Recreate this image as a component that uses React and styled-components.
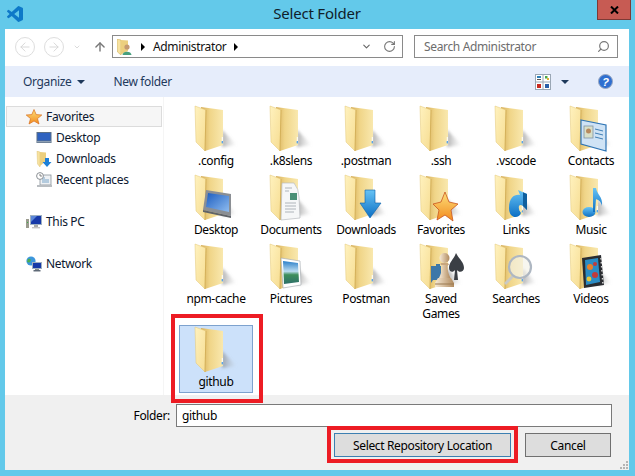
import React from "react";
import styled, { createGlobalStyle } from "styled-components";
import { ArrowUp, ArrowLeft, ArrowRight, ChevronDown, RotateCw, Search } from "lucide-react";

const GlobalStyle = createGlobalStyle`
  html, body { margin: 0; padding: 0; background: #63c9ea; }
  * { box-sizing: border-box; }
`;

const Frame = styled.div`
  position: relative;
  display: flex;
  flex-direction: column;
  width: 635px;
  height: 476px;
  overflow: hidden;
  background: #63c9ea;
  font-family: "Noto Sans", "Open Sans", sans-serif;
  font-size: 12px;
  letter-spacing: -0.35px;
  color: #000;
`;

const TitleBar = styled.div`
  display: flex;
  align-items: flex-start;
  height: 29px;
`;

const Logo = styled.svg`
  width: 16px;
  height: 16px;
  margin: 6px 0 0 7px;
  fill: #0e79c8;
`;

const Title = styled.div`
  flex: 1;
  padding: 3px 0 0 14px;
  text-align: center;
  font-size: 15px;
  line-height: 20px;
  letter-spacing: -0.2px;
  color: #10202a;
`;

const CloseButton = styled.div`
  display: flex;
  align-items: center;
  justify-content: center;
  width: 34px;
  height: 20px;
  margin-right: 4px;
  background: #c75b53;
  border: 1px solid #7d3a36;
  border-top: 0;
`;

const Client = styled.div`
  display: flex;
  flex-direction: column;
  height: 441px;
  margin: 0 6px 0 5px;
  background: #fff;
`;

const NavRow = styled.div`
  display: flex;
  align-items: flex-start;
  height: 37px;
  padding: 6px 0 0 10px;
`;

const NavCircle = styled.div`
  display: flex;
  align-items: center;
  justify-content: center;
  width: 20px;
  height: 20px;
  margin: 2px 9px 0 0;
  color: #d4d4d4;
  border: 1px solid #dedede;
  border-radius: 50%;
`;

const NavGlyph = styled.div`
  display: flex;
  align-items: center;
  justify-content: center;
  height: 23px;
  width: ${(p) => p.$w}px;
  margin-right: ${(p) => p.$mr}px;
  color: ${(p) => p.$color};
`;

const PathBox = styled.div`
  display: flex;
  align-items: center;
  width: 291px;
  height: 23px;
  padding: 0 4px;
  border: 1px solid #8a8a8a;
`;

const PathText = styled.span`
  margin: 0 8px;
  color: #111;
`;

const RightTri = styled.span`
  width: 0;
  height: 0;
  border-left: 4px solid #000;
  border-top: 4px solid transparent;
  border-bottom: 4px solid transparent;
`;

const Spacer = styled.span`
  flex: ${(p) => (p.$w ? `0 0 ${p.$w}px` : 1)};
`;

const SearchBox = styled.div`
  display: flex;
  align-items: center;
  width: 204px;
  height: 23px;
  margin-left: 11px;
  padding: 0 7px 0 9px;
  border: 1px solid #8a8a8a;
  color: #6d6d6d;
`;

const FlippedSearch = styled(Search)`
  transform: scaleX(-1);
`;

const Toolbar = styled.div`
  display: flex;
  align-items: center;
  height: 31px;
  padding-left: 18px;
  background: #e6edfb;
  color: #1e395b;
`;

const DownTri = styled.span`
  width: 0;
  height: 0;
  margin: 0 ${(p) => p.$mr || 0}px 0 ${(p) => p.$ml || 0}px;
  border-top: 4px solid #1e395b;
  border-left: 4px solid transparent;
  border-right: 4px solid transparent;
`;

const Body = styled.div`
  display: flex;
  height: 298px;
`;

const Sidebar = styled.div`
  width: 159px;
  padding-top: 9px;
  border-right: 1px solid #f5f5f5;
`;

const TreeGroup = styled.div`
  margin-bottom: 21px;
`;

const TreeRow = styled.div`
  display: flex;
  align-items: center;
  gap: 4px;
  width: 156px;
  height: 21px;
  margin-left: 1px;
  padding-left: ${(p) => (p.$child ? 29 : 19)}px;
  color: #0c1830;
  border: 1px solid ${(p) => (p.$active ? "#dcdcdc" : "transparent")};
  background: ${(p) => (p.$active ? "#f6f6f6" : "transparent")};
`;

const FileGrid = styled.div`
  display: grid;
  grid-template-columns: repeat(6, 75px);
  grid-template-rows: 68px 68px 82px 68px;
  row-gap: 1px;
  padding: 7px 0 0 15px;
`;

const Tile = styled.div`
  position: relative;
  width: 74px;
  padding-top: 1px;
  text-align: center;
  line-height: 15px;
  border: 1px solid ${(p) => (p.$selected ? "#7da2ce" : "transparent")};
  background: ${(p) => (p.$selected ? "#cce1fa" : "transparent")};
  ${(p) =>
    p.$selected &&
    `&::after {
      content: "";
      position: absolute;
      inset: -12px -11px -11px -9px;
      border: 4.5px solid #ed1c24;
      z-index: 2;
    }`}
`;

const FolderSvg = styled.svg`
  display: block;
  width: 48px;
  height: 46px;
  margin: 0 0 1px 15px;
  overflow: visible;
`;

const Label = styled.div`
  padding: 0 4px;
  color: #000;
`;

const Footer = styled.div`
  display: flex;
  flex-direction: column;
  position: relative;
  height: 75px;
  padding-top: 9px;
  background: #f0f0f0;
`;

const FolderRow = styled.div`
  display: flex;
  align-items: center;
  justify-content: flex-end;
  padding-right: 17px;
`;

const FolderInput = styled.div`
  width: 436px;
  height: 23px;
  margin-left: 6px;
  padding-left: 5px;
  line-height: 21px;
  background: #fff;
  border: 1px solid #7a7a7a;
`;

const ButtonRow = styled.div`
  display: flex;
  justify-content: flex-end;
  gap: 14px;
  margin-top: 6px;
  padding-right: 18px;
`;

const Button = styled.div`
  position: relative;
  display: flex;
  align-items: center;
  justify-content: center;
  width: ${(p) => p.$w}px;
  height: 24px;
  background: #dddddd;
  border: 1px solid ${(p) => (p.$primary ? "#3c7fb1" : "#707070")};
  ${(p) =>
    p.$primary &&
    `&::after {
      content: "";
      position: absolute;
      inset: -8px -8px -7px -8px;
      border: 4px solid #ed1c24;
    }`}
`;

const Grip = styled.svg`
  position: absolute;
  right: 1px;
  bottom: 1px;
  width: 9px;
  height: 9px;
  fill: #b4b4b4;
`;

const DefsHolder = styled.svg`
  display: block;
`;

const GradientDefs = () => (
  <DefsHolder width="0" height="0">
    <defs>
      <linearGradient id="flap" x1="0" y1="0" x2="1" y2="1">
        <stop offset="0" stopColor="#fff2bf" />
        <stop offset="1" stopColor="#f6dc90" />
      </linearGradient>
      <linearGradient id="back" x1="0" y1="0" x2="1" y2="0">
        <stop offset="0" stopColor="#d6ae5a" />
        <stop offset="0.4" stopColor="#f0d588" />
        <stop offset="1" stopColor="#f9e8ae" />
      </linearGradient>
      <linearGradient id="shade" x1="0" y1="0" x2="1" y2="0">
        <stop offset="0" stopColor="#777" stopOpacity="0.6" />
        <stop offset="1" stopColor="#bdbdbd" stopOpacity="0" />
      </linearGradient>
      <filter id="soft" x="-30%" y="-30%" width="160%" height="160%">
        <feGaussianBlur stdDeviation="1.4" />
      </filter>
      <linearGradient id="screen" x1="0" y1="0" x2="1" y2="1">
        <stop offset="0" stopColor="#1d5ec0" />
        <stop offset="1" stopColor="#8fbcf0" />
      </linearGradient>
      <linearGradient id="bluearrow" x1="0" y1="0" x2="0" y2="1">
        <stop offset="0" stopColor="#67c3f5" />
        <stop offset="1" stopColor="#0c6fc4" />
      </linearGradient>
      <linearGradient id="starfill" x1="0" y1="0" x2="0" y2="1">
        <stop offset="0" stopColor="#fde07a" />
        <stop offset="1" stopColor="#f28a1e" />
      </linearGradient>
      <linearGradient id="photo" x1="0" y1="0" x2="0" y2="1">
        <stop offset="0" stopColor="#2b7fc9" />
        <stop offset="0.45" stopColor="#bcdcf0" />
        <stop offset="0.6" stopColor="#3f8f5a" />
        <stop offset="1" stopColor="#2d6f6a" />
      </linearGradient>
      <linearGradient id="pawn" x1="0" y1="0" x2="1" y2="0">
        <stop offset="0" stopColor="#f7ead6" />
        <stop offset="1" stopColor="#b08a5e" />
      </linearGradient>
    </defs>
  </DefsHolder>
);

const DesktopOverlay = () => (
  <g>
    <polygon points="11,15 36,19 36,41 8,35" fill="#8b8f94" />
    <polygon points="13,18 34,21 34,37 11,32" fill="url(#screen)" />
    <polygon points="8,35 36,41 36,43 8,37" fill="#5f6368" />
  </g>
);

const DocumentsOverlay = () => (
  <g>
    <path d="M12 8 L24 8 Q29 14 29 22 L30 43 L11 45 Z" fill="#f6f7f8" stroke="#b9bcc0" strokeWidth="0.7" />
    <path d="M15 13h7M15 16h4M15 28h11M15 31h11M15 34h11M15 37h9" stroke="#aeb4ba" strokeWidth="1" />
    <rect x="20" y="18" width="7" height="7" fill="#4a8f76" />
  </g>
);

const DownloadsOverlay = () => (
  <polygon points="20,15 30,15 30,28 36,28 25,43 15,28 20,28" fill="url(#bluearrow)" stroke="#0c5fa8" strokeWidth="0.6" />
);

const ContactsOverlay = () => (
  <g>
    <polygon points="11,14 36,19 36,45 11,38" fill="#cfe3f5" stroke="#2f75b5" strokeWidth="1.2" />
    <rect x="14" y="20" width="9" height="12" fill="#d8dfc8" stroke="#7f93a6" strokeWidth="0.8" />
    <circle cx="18.5" cy="25" r="2.5" fill="#b78a5e" />
    <path d="M25 23l8 2M25 27l8 2M25 31l8 2" stroke="#3f7fb5" strokeWidth="1" />
  </g>
);

const StarShape = () => (
  <polygon
    points="25,17 29,27 38,29 31,35 33,46 25,40 17,45 19,35 13,29 21,27"
    fill="url(#starfill)"
    stroke="#c9541e"
    strokeWidth="0.8"
  />
);

const LinksOverlay = () => (
  <g>
    <path d="M14 33 C14 22 20 19 25 20 L23 15 L32 19 L32 35 L28 31 C24 28 22 32 26 38 C24 44 14 44 14 33 Z" fill="url(#bluearrow)" />
    <path d="M28 17.2 L32 19 L32 35 L28 31 Z" fill="#0f5f9e" />
    <circle cx="26" cy="35" r="1.5" fill="#fbe8a8" />
  </g>
);

const MusicOverlay = () => (
  <g fill="url(#bluearrow)">
    <ellipse cx="19" cy="37" rx="6.5" ry="5" />
    <path d="M23 13 L26 13 C27 20 33 21 32 31 C31 26 28 25 26 24 L25 37 L23 37 Z" />
  </g>
);

const PicturesOverlay = () => (
  <g>
    <path d="M11 14 L30 17 L31 41 L13 44 Z" fill="#fff" stroke="#aab0b5" strokeWidth="0.7" />
    <path d="M13 17 L28 19 L29 38 L14 40 Z" fill="url(#photo)" />
  </g>
);

const GamesOverlay = () => (
  <g>
    <path d="M11 22 h5 v-2 h4 v2 h1 v14 h-8 l-2 3 Z" fill="#3d77a8" />
    <path d="M36 9 C39 15 44 18 44 24 C44 28 39 29 37 26 L38 36 L34 36 L35 26 C33 29 29 28 29 24 C29 18 34 15 36 9 Z" fill="#3b3f45" />
    <path d="M20 20 h9 l-1.5 2 C27.5 27 29 31 30.5 34 L19 34 C20.5 31 22 27 22 22 Z" fill="url(#pawn)" />
    <circle cx="24.5" cy="14" r="5" fill="url(#pawn)" />
    <rect x="20.5" y="19" width="8" height="2" rx="1" fill="#c8a67c" />
    <path d="M18 34 h13 l3 5 v4 h-19 v-4 Z" fill="url(#pawn)" />
    <rect x="15" y="39.5" width="19" height="1" fill="#9a7a52" />
  </g>
);

const SearchesOverlay = () => (
  <g>
    <path d="M17 31 L9 39 L11 41 L19 33" fill="#c9c9c4" />
    <circle cx="25" cy="23" r="11" fill="#f3f1e6" fillOpacity="0.65" stroke="#aeb7c2" strokeWidth="2.2" />
  </g>
);

const VideosOverlay = () => (
  <g>
    <polygon points="12,14 31,11 34,41 14,44" fill="#2a2c30" />
    <polygon points="15,16 28,14 30,38 16,41" fill="#2b8cc4" />
    <path d="M31 14v1.5M31.3 18v1.5M31.6 22v1.5M31.9 26v1.5M32.2 30v1.5M32.5 34v1.5M32.8 38v1.5" stroke="#d8d8d8" strokeWidth="1.4" />
    <circle cx="20" cy="23" r="3" fill="#e8812a" />
    <circle cx="25" cy="31" r="3" fill="#c23a3a" />
    <circle cx="19" cy="35" r="2.4" fill="#e8c63a" />
    <circle cx="25" cy="20" r="2" fill="#c23a3a" />
  </g>
);

const FolderGraphic = ({ children }) => (
  <FolderSvg viewBox="0 0 48 46">
    <polygon points="27,24 42,39 27,41" fill="url(#shade)" filter="url(#soft)" />
    <polygon points="6,1 28,4 28,39 10,45" fill="url(#back)" />
    <rect x="26.8" y="31" width="1" height="5" fill="#fff" />
    <rect x="26.6" y="35" width="1.4" height="2.4" fill="#5aa5ea" />
    <polygon points="0,0 11,4 10,45 1,36" fill="url(#flap)" stroke="#e3c676" strokeWidth="0.5" />
    <path d="M11 4 L10 45" stroke="#cfa951" strokeWidth="0.8" />
    {children}
  </FolderSvg>
);

const folders = [
  { name: ".config" },
  { name: ".k8slens" },
  { name: ".postman" },
  { name: ".ssh" },
  { name: ".vscode" },
  { name: "Contacts", art: <ContactsOverlay /> },
  { name: "Desktop", art: <DesktopOverlay /> },
  { name: "Documents", art: <DocumentsOverlay /> },
  { name: "Downloads", art: <DownloadsOverlay /> },
  { name: "Favorites", art: <StarShape /> },
  { name: "Links", art: <LinksOverlay /> },
  { name: "Music", art: <MusicOverlay /> },
  { name: "npm-cache" },
  { name: "Pictures", art: <PicturesOverlay /> },
  { name: "Postman" },
  { name: "Saved Games", art: <GamesOverlay /> },
  { name: "Searches", art: <SearchesOverlay /> },
  { name: "Videos", art: <VideosOverlay /> },
  { name: "github", selected: true },
];

const StarIcon = () => (
  <svg width="16" height="16" viewBox="0 0 16 16">
    <polygon points="8,0.5 10.2,5.6 15.8,6 11.5,9.6 13,15 8,12 3,15 4.5,9.6 0.2,6 5.8,5.6" fill="url(#starfill)" stroke="#d9701f" strokeWidth="0.7" />
  </svg>
);

const MonitorIcon = () => (
  <svg width="16" height="16" viewBox="0 0 16 16">
    <rect x="0.5" y="2" width="15" height="11" fill="#5b6f86" />
    <rect x="1.5" y="3" width="13" height="7.5" fill="#2f62c0" />
    <rect x="1" y="11" width="14" height="1.4" fill="#8ea0b4" />
  </svg>
);

const DownloadsIcon = () => (
  <svg width="16" height="16" viewBox="0 0 16 16">
    <polygon points="1,0 4,1 4,16 1.5,13" fill="#f7e29f" stroke="#d9bc68" strokeWidth="0.4" />
    <polygon points="4,1 10,1.5 10,10 4,15" fill="#eccf7e" />
    <polygon points="9,7 13,7 13,11 15.5,11 11,16 6.5,11 9,11" fill="#1d80d8" />
  </svg>
);

const RecentIcon = () => (
  <svg width="16" height="16" viewBox="0 0 16 16">
    <rect x="4" y="3" width="11" height="10" fill="#eef1f4" stroke="#8a949c" strokeWidth="0.8" />
    <path d="M6 6h3M6 8h7M6 10h7" stroke="#7aa5c8" strokeWidth="1" />
    <circle cx="4" cy="4" r="3.4" fill="#fff" stroke="#8a8f94" />
    <path d="M4 2v2h2" stroke="#666" strokeWidth="0.8" fill="none" />
    <rect x="1" y="13" width="15" height="2" fill="#b9bdc1" />
  </svg>
);

const PcIcon = () => (
  <svg width="16" height="16" viewBox="0 0 16 16">
    <rect x="0" y="5" width="3" height="9" fill="#9b9b8e" />
    <rect x="1" y="8" width="1" height="1" fill="#39b54a" />
    <rect x="4" y="1" width="12" height="10" fill="#9eb0c2" />
    <rect x="5" y="2" width="10" height="8" fill="#1739a8" />
    <path d="M5 2h6L5 8z" fill="#5b86d8" />
    <rect x="8" y="11" width="4" height="2" fill="#a9a9a9" />
    <rect x="6" y="13" width="8" height="1.4" fill="#c4c4c4" />
  </svg>
);

const NetworkIcon = () => (
  <svg width="16" height="16" viewBox="0 0 16 16">
    <circle cx="5" cy="5" r="4.6" fill="#3c96dc" />
    <path d="M2 3 C4 2 6 4 4 6 C3 7 2 6 1 6Z" fill="#4cae50" />
    <rect x="6" y="6" width="10" height="7" fill="#a0b0c0" />
    <rect x="7" y="7" width="8" height="5" fill="#1739a8" />
    <rect x="9" y="13" width="4" height="1.2" fill="#8a8a8a" />
    <rect x="7.5" y="14.2" width="7" height="1.2" fill="#3c4a5a" />
  </svg>
);

const AddressFolder = () => (
  <svg width="15" height="16" viewBox="0 0 15 16">
    <polygon points="0,0 4,1 4,16 0.5,13" fill="#f7e29f" stroke="#c9a94f" strokeWidth="0.5" />
    <polygon points="4,1 11,1.5 11,12 4,15.5" fill="#eccf7e" />
    <circle cx="10" cy="8" r="2.6" fill="#c49a72" />
    <path d="M5.5 16 C5.5 11.5 14.5 11.5 14.5 16 Z" fill="#46a07e" />
  </svg>
);

const ViewsIcon = () => (
  <svg width="16" height="16" viewBox="0 0 16 16">
    <rect x="0.5" y="0.5" width="15" height="15" fill="#fff" stroke="#9aa7b5" />
    <path d="M8 0v16M0 8h16" stroke="#9aa7b5" />
    <rect x="2" y="2" width="4" height="2" fill="#2c7fb8" />
    <rect x="2" y="5" width="4" height="1" fill="#555" />
    <rect x="10" y="2" width="2.5" height="2.5" fill="#4aa84a" />
    <rect x="12" y="4" width="2" height="2" fill="#e0b030" />
    <rect x="2" y="10" width="4" height="4" fill="#c8281e" />
    <rect x="10" y="10" width="4" height="4" fill="#2a5fa8" />
  </svg>
);

const HelpIcon = () => (
  <svg width="15" height="15" viewBox="0 0 15 15">
    <circle cx="7.5" cy="7.5" r="7" fill="#2f6fd0" stroke="#9aa7c0" />
    <text x="7.5" y="11.5" textAnchor="middle" fontSize="11" fontWeight="700" fontStyle="italic" fill="#fff" fontFamily="Liberation Sans, sans-serif">?</text>
  </svg>
);

const App = () => {
  return (
    <>
      <GlobalStyle />
      <Frame>
        <GradientDefs />
        <TitleBar>
          <Logo viewBox="0 0 24 24">
            <path d="M23.15 2.587L18.21.21a1.494 1.494 0 0 0-1.705.29l-9.46 8.63-4.12-3.128a.999.999 0 0 0-1.276.057L.327 7.261A1 1 0 0 0 .326 8.74L3.899 12 .326 15.26a1 1 0 0 0 .001 1.479L1.65 17.94a.999.999 0 0 0 1.276.057l4.12-3.128 9.46 8.63a1.492 1.492 0 0 0 1.704.29l4.942-2.377A1.5 1.5 0 0 0 24 20.06V3.939a1.5 1.5 0 0 0-.85-1.352zm-5.146 14.861L10.826 12l7.178-5.448v10.896z" />
          </Logo>
          <Title>Select Folder</Title>
          <CloseButton>
            <svg width="9" height="8" viewBox="0 0 9 8">
              <path d="M1 0.5 L8 7.5 M8 0.5 L1 7.5" stroke="#000" strokeWidth="2" />
            </svg>
          </CloseButton>
        </TitleBar>
        <Client>
          <NavRow>
            <NavCircle><ArrowLeft size={14} strokeWidth={1.5} /></NavCircle>
            <NavCircle><ArrowRight size={14} strokeWidth={1.5} /></NavCircle>
            <NavGlyph $w={8} $mr={12} $color="#c8c8c8"><ChevronDown size={10} strokeWidth={2} /></NavGlyph>
            <NavGlyph $w={14} $mr={5} $color="#777"><ArrowUp size={16} strokeWidth={2.4} /></NavGlyph>
            <PathBox>
              <AddressFolder />
              <Spacer $w={9} />
              <RightTri />
              <PathText>Administrator</PathText>
              <RightTri />
              <Spacer />
              <ChevronDown size={11} strokeWidth={2.4} color="#666" />
              <Spacer $w={11} />
              <RotateCw size={13} strokeWidth={2} color="#777" />
              <Spacer $w={2} />
            </PathBox>
            <SearchBox>
              Search Administrator
              <Spacer />
              <FlippedSearch size={13} strokeWidth={2.2} color="#777" />
            </SearchBox>
          </NavRow>
          <Toolbar>
            <span>Organize</span>
            <DownTri $ml={6} $mr={28} />
            <span>New folder</span>
            <Spacer />
            <ViewsIcon />
            <DownTri $ml={10} $mr={29} />
            <HelpIcon />
            <Spacer $w={16} />
          </Toolbar>
          <Body>
            <Sidebar>
              <TreeGroup>
                <TreeRow $active><StarIcon />Favorites</TreeRow>
                <TreeRow $child><MonitorIcon />Desktop</TreeRow>
                <TreeRow $child><DownloadsIcon />Downloads</TreeRow>
                <TreeRow $child><RecentIcon />Recent places</TreeRow>
              </TreeGroup>
              <TreeGroup>
                <TreeRow><PcIcon />This PC</TreeRow>
              </TreeGroup>
              <TreeGroup>
                <TreeRow><NetworkIcon />Network</TreeRow>
              </TreeGroup>
            </Sidebar>
            <FileGrid>
              {folders.map((f) => (
                <Tile key={f.name} $selected={f.selected}>
                  <FolderGraphic>{f.art}</FolderGraphic>
                  <Label>{f.name}</Label>
                </Tile>
              ))}
            </FileGrid>
          </Body>
          <Footer>
            <FolderRow>
              Folder:
              <FolderInput>github</FolderInput>
            </FolderRow>
            <ButtonRow>
              <Button $w={177} $primary>Select Repository Location</Button>
              <Button $w={86}>Cancel</Button>
            </ButtonRow>
            <Grip viewBox="0 0 9 9">
              <rect x="7" y="1" width="2" height="2" />
              <rect x="4" y="4" width="2" height="2" />
              <rect x="7" y="4" width="2" height="2" />
              <rect x="1" y="7" width="2" height="2" />
              <rect x="4" y="7" width="2" height="2" />
              <rect x="7" y="7" width="2" height="2" />
            </Grip>
          </Footer>
        </Client>
      </Frame>
    </>
  );
};

export default App;
